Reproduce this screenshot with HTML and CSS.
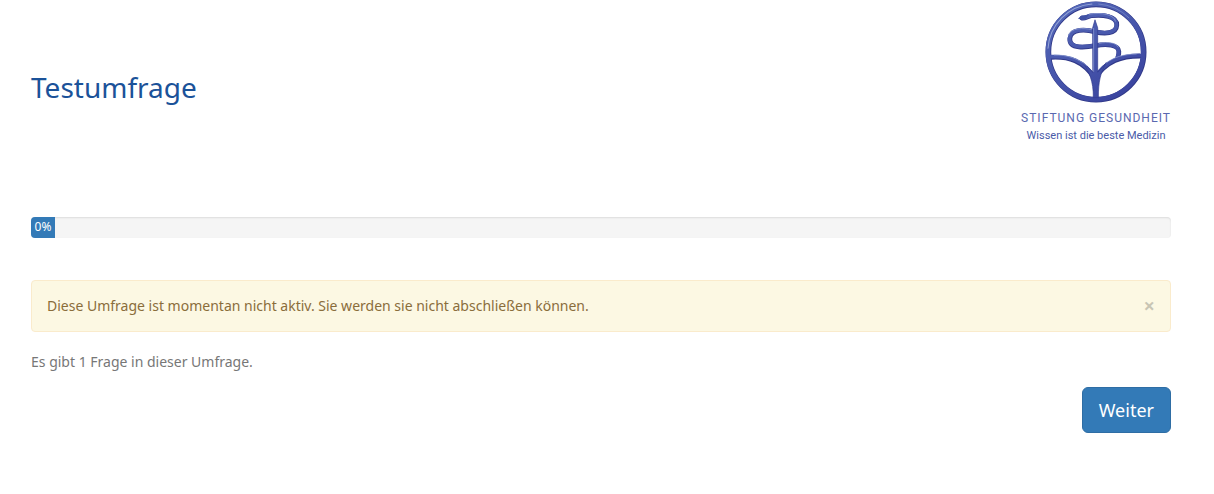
FILE: index.html
```html
<!DOCTYPE html>
<html lang="de">
<head>
<meta charset="UTF-8">
<meta name="viewport" content="width=device-width, initial-scale=1.0">
<title>Testumfrage</title>
<link rel="stylesheet" href="styles.css">
</head>
<body>

<!-- Header -->
<header class="survey-header">
    <h1 class="survey-title">Testumfrage</h1>
    <div class="logo">
        <svg class="logo-mark" viewBox="20 4 304 304" aria-hidden="true">
            <defs>
                <linearGradient id="logo-blue" gradientUnits="userSpaceOnUse" x1="60" y1="20" x2="240" y2="300">
                    <stop offset="0" stop-color="#5468b8"/>
                    <stop offset="1" stop-color="#3a449f"/>
                </linearGradient>
            </defs>
            <g fill="none" stroke-linecap="round" stroke-linejoin="round">
                <!-- dark edge -->
                <g stroke="#2f3787" stroke-width="14">
                    <circle cx="172" cy="156" r="142" stroke-width="17"/>
                    <path d="M130 55C140 57 146 50 158 48C190 44 235 48 234 76C233 103 196 102 170 96C143 89 96 85 94 116C92 149 143 142 171 137C204 131 239 134 240 154C241 162 239 166 237 172"/>
                    <path d="M38 172C90 169 134 182 168 235C204 182 248 168 302 168"/>
                </g>
                <!-- face -->
                <g stroke="url(#logo-blue)" stroke-width="11">
                    <circle cx="171" cy="155" r="142" stroke-width="14"/>
                    <path d="M130 54C140 56 146 49 158 47C190 43 234 47 233 75C232 102 196 101 170 95C143 88 95 84 93 115C91 148 143 141 171 136C204 130 238 133 239 153C240 161 238 165 236 171"/>
                    <path d="M38 170C90 167 134 180 168 232C204 180 248 166 302 166"/>
                </g>
                <path d="M118 57L129 47L150 46L140 60Z" fill="#4052a4"/>
                <path d="M162 84L169 60L177 84V216C190 206 194 197 203 187C185 218 179 244 179 292H164C165 244 151 212 132 187C146 197 152 208 162 216Z" fill="url(#logo-blue)" stroke="#323b8e" stroke-width="2"/>
                <!-- highlight -->
                <g stroke="#96a5d8" stroke-width="2">
                    <path d="M29 145A142 142 0 0 1 160 13" stroke-width="3"/>
                    <path d="M180 13A142 142 0 0 1 270 54" stroke="#7f90cc"/>
                    <path d="M48 165C86 164 120 176 145 197M202 189C226 171 252 163 292 162"/>
                    <path d="M152 43C188 38 226 43 230 64M90 106C96 83 136 84 158 89M182 130C208 125 232 128 238 141"/>
                    <path d="M165 86V214"/>
                </g>
            </g>
        </svg>
        <p class="logo-name">STIFTUNG GESUNDHEIT</p>
        <p class="logo-claim">Wissen ist die beste Medizin</p>
    </div>
</header>

<!-- Survey -->
<main class="survey">
    <div class="progress">
        <div class="progress-bar" role="progressbar" aria-label="Fortschritt" aria-valuenow="0" aria-valuemin="0" aria-valuemax="100">0%</div>
    </div>

    <div class="alert" role="alert">
        <span>Diese Umfrage ist momentan nicht aktiv. Sie werden sie nicht abschließen können.</span>
        <button type="button" class="close" aria-label="Schließen">×</button>
    </div>

    <p class="question-count">Es gibt 1 Frage in dieser Umfrage.</p>

    <form class="navigator">
        <button type="submit" class="btn-next">Weiter</button>
    </form>
</main>

</body>
</html>
```

FILE: styles.css
```css
* {
    box-sizing: border-box;
    margin: 0;
    padding: 0;
}

body {
    background-color: #fff;
    color: #777;
    font-family: "Noto Sans", sans-serif;
    font-size: 14px;
    line-height: 20px;
    padding: 0 43px 0 31px;
}

.survey-header {
    display: flex;
    justify-content: space-between;
    align-items: center;
    padding-top: 1px;
    margin-bottom: 72px;
}

.survey-title {
    color: #1b5299;
    font-size: 28px;
    font-weight: 400;
    line-height: 32px;
    padding-top: 28px;
}

.logo {
    display: flex;
    flex-direction: column;
    align-items: center;
    color: #5a68b0;
    font-family: Roboto, sans-serif;
    font-size: 12px;
    line-height: 18px;
}

.logo-mark {
    width: 102px;
    height: 102px;
    margin-bottom: 6px;
}

.logo-name {
    letter-spacing: 1px;
}

.logo-claim {
    color: #4a5ba8;
    font-size: 11px;
}

.progress {
    height: 21px;
    margin-bottom: 42px;
    background-color: #f5f5f5;
    border-radius: 4px;
    box-shadow: inset 0 1px 2px rgba(0, 0, 0, 0.1);
    overflow: hidden;
}

.progress-bar {
    width: 24px;
    height: 100%;
    background-color: #337ab7;
    color: #fff;
    font-size: 12px;
    text-align: center;
}

.alert {
    display: flex;
    justify-content: space-between;
    align-items: center;
    padding: 15px;
    margin-bottom: 20px;
    background-color: #fcf8e3;
    border: 1px solid #faebcc;
    border-radius: 4px;
    color: #8a6d3b;
}

.close {
    background: none;
    border: none;
    color: #000;
    cursor: pointer;
    font-family: inherit;
    font-size: 20px;
    font-weight: 700;
    line-height: 20px;
    opacity: 0.2;
}

.question-count {
    margin-bottom: 15px;
}

.navigator {
    display: flex;
    justify-content: flex-end;
}

.btn-next {
    padding: 10px 16px;
    background-color: #337ab7;
    border: 1px solid #2e6da4;
    border-radius: 6px;
    color: #fff;
    cursor: pointer;
    font-family: inherit;
    font-size: 18px;
    line-height: 24px;
}
```
